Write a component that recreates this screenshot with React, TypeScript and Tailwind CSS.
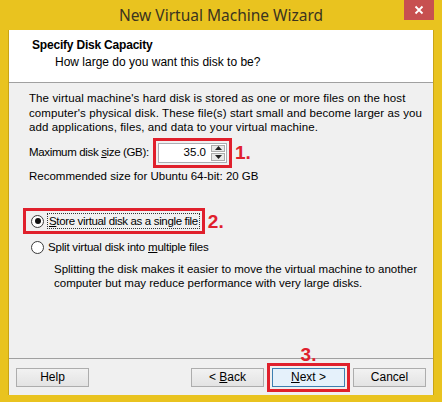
import React from "react";

const font = { fontFamily: '"Liberation Sans", Arial, sans-serif' };

function Btn({ children, def }: { children: React.ReactNode; def?: boolean }) {
  return (
    <div
      className={`w-[73px] h-[19px] flex items-center justify-center text-[12px] text-[#000] border ${
        def ? "border-[#3c7fb1] bg-[#e5f1fb]" : "border-[#adadad] bg-gradient-to-b from-[#f2f2f2] to-[#e3e3e3]"
      }`}
    >
      <span className="whitespace-pre">{children}</span>
    </div>
  );
}

function Radio({ checked }: { checked?: boolean }) {
  return (
    <div className="w-[13px] h-[13px] rounded-full border border-[#3a3a3a] bg-white flex items-center justify-center shrink-0">
      {checked && <div className="w-[6px] h-[6px] rounded-full bg-[#111]" />}
    </div>
  );
}

export default function App() {
  return (
    <div className="w-[442px] h-[402px] bg-[#e9c31f] flex flex-col text-[#000]" style={font}>
      <div className="h-[30px] relative flex items-center justify-center shrink-0">
        <span className="text-[15.5px] text-[#3b3420] mt-[1px]" style={{ fontFamily: '"Noto Sans", sans-serif' }}>
          New Virtual Machine Wizard
        </span>
        <div className="absolute right-[8px] top-0 w-[30px] h-[20px] bg-[#c75050] flex items-center justify-center">
          <svg width="10" height="10" viewBox="0 0 10 10">
            <path d="M1.5 1.5 L8.5 8.5 M8.5 1.5 L1.5 8.5" stroke="#fff" strokeWidth="1.8" />
          </svg>
        </div>
      </div>
      <div className="mx-[8px] mb-[7px] flex-1 flex flex-col bg-[#f0f0f0] border-l border-r border-[#c9a415]">
        <div className="h-[53px] bg-white border-b border-[#a0a0a0] pl-[23px] pt-[8px] shrink-0 text-[12px]">
          <div className="font-bold leading-[15px] tracking-[-0.2px]">Specify Disk Capacity</div>
          <div className="leading-[15px] pl-[23px] mt-[2px]">How large do you want this disk to be?</div>
        </div>
        <div className="flex-1 pl-[20px] pt-[8px] text-[11.5px] leading-[14.5px] whitespace-nowrap">
          <div className="tracking-[0.1px]">
            The virtual machine's hard disk is stored as one or more files on the host
            <br />
            computer's physical disk. These file(s) start small and become larger as you
            <br />
            add applications, files, and data to your virtual machine.
          </div>
          <div className="flex items-center mt-[3px] h-[30px]">
            <span className="w-[124px] tracking-[-0.35px]">
              Maximum disk <u>s</u>ize (GB):
            </span>
            <div className="border-[3px] border-[#e0202c] p-[2px] w-[79px] h-[30px]">
              <div className="w-full h-full bg-white border border-[#abadb3] flex items-center">
                <span className="flex-1 text-right pr-[4px]">35.0</span>
                <div className="w-[16px] h-full flex flex-col gap-[1px] p-[1px] pr-[1px]">
                  <div className="flex-1 border border-[#acacac] bg-[#e9e9e9] flex items-center justify-center">
                    <svg width="7" height="4" viewBox="0 0 7 4"><path d="M0 4 L3.5 0 L7 4Z" fill="#222" /></svg>
                  </div>
                  <div className="flex-1 border border-[#acacac] bg-[#e9e9e9] flex items-center justify-center">
                    <svg width="7" height="4" viewBox="0 0 7 4"><path d="M0 0 L3.5 4 L7 0Z" fill="#222" /></svg>
                  </div>
                </div>
              </div>
            </div>
            <span className="ml-[3px] text-[19px] font-bold text-[#e0202c] leading-none">1.</span>
          </div>
          <div className="mt-[1px]">Recommended size for Ubuntu 64-bit: 20 GB</div>
          <div className="flex items-center mt-[25px] -ml-[6px]">
            <div className="border-[3px] border-[#e0202c] h-[26px] flex items-center pl-[5px] pr-[2px]">
              <Radio checked />
              <span className="ml-[3px] border border-dotted border-[#333] px-[1px] leading-[14px] tracking-[-0.35px]">
                <u>S</u>tore virtual disk as a single file
              </span>
            </div>
            <span className="ml-[3px] text-[19px] font-bold text-[#e0202c] leading-none">2.</span>
          </div>
          <div className="flex items-center mt-[6px] ml-[2px]">
            <Radio />
            <span className="ml-[4px] tracking-[-0.2px]">
              Split virtual disk into <u>m</u>ultiple files
            </span>
          </div>
          <div className="pl-[25px] mt-[7px]">
            Splitting the disk makes it easier to move the virtual machine to another
            <br />
            computer but may reduce performance with very large disks.
          </div>
        </div>
        <div className="h-[37px] border-t border-[#a0a0a0] flex items-center px-[7px] shrink-0 relative">
          <Btn>Help</Btn>
          <div className="flex-1" />
          <Btn>
            {"< "}
            <u>B</u>ack
          </Btn>
          <div className="ml-[3px] border-[3px] border-[#e0202c] p-[2px] relative">
            <span className="absolute left-1/2 -translate-x-1/2 -top-[21px] text-[19px] font-bold text-[#e0202c] leading-none">3.</span>
            <Btn def>
              <u>N</u>ext{" >"}
            </Btn>
          </div>
          <div className="ml-[3px]">
            <Btn>Cancel</Btn>
          </div>
        </div>
      </div>
    </div>
  );
}
